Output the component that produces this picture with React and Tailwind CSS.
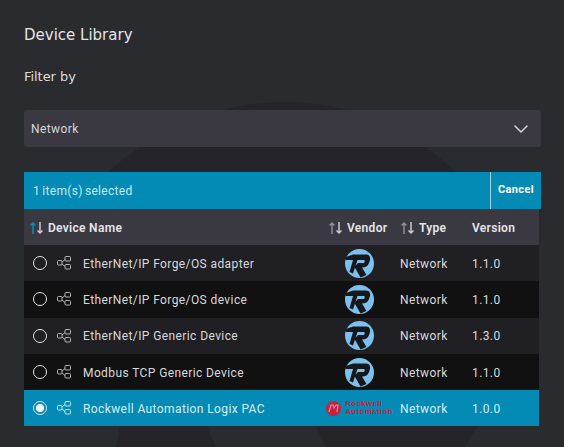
import { ChevronDown } from 'lucide-react';

const rows = [
  { name: 'EtherNet/IP Forge/OS adapter', version: '1.1.0', bg: 'bg-[#202024]' },
  { name: 'EtherNet/IP Forge/OS device', version: '1.1.0', bg: 'bg-[#111112]' },
  { name: 'EtherNet/IP Generic Device', version: '1.3.0', bg: 'bg-[#202024]' },
  { name: 'Modbus TCP Generic Device', version: '1.1.0', bg: 'bg-[#111112]' },
  { name: 'Rockwell Automation Logix PAC', version: '1.0.0', bg: 'bg-[#038bb5]', selected: true },
];

function SortIcon({ active }) {
  return (
    <svg width="16" height="14" viewBox="0 0 16 14" fill="none" strokeWidth="1.5" className="shrink-0">
      <path d="M4 13V2M1.5 4.5 4 2l2.5 2.5" stroke={active ? '#0b8db8' : '#8d8d93'} />
      <path d="M11 1v11M8.5 9.5 11 12l2.5-2.5" stroke="#c9c9ce" />
    </svg>
  );
}

function NodesIcon({ color }) {
  return (
    <svg width="14" height="14" viewBox="0 0 14 14" fill="none" stroke={color} strokeWidth="1" className="shrink-0">
      <rect x="0.5" y="4.5" width="4.5" height="4.5" rx="1" />
      <rect x="8" y="0.5" width="5.5" height="4.5" rx="1" />
      <rect x="8" y="8.5" width="5.5" height="4.5" rx="1" />
      <path d="M5 6 8 3.5M5 8l3 2.5" />
    </svg>
  );
}

function RLogo() {
  return (
    <svg width="29" height="29" viewBox="0 0 29 29">
      <circle cx="14.5" cy="14.5" r="14.5" fill="#7cc1ee" />
      <path d="M1 8 8 5.5H21C25 5.5 25.5 9 25 11L24 14C23 17 20.5 18.5 17 18.5L21.5 26 15.5 28.5 9.5 18 13 14H18C19 14 19.5 13.5 19.7 12.5 19.9 11.5 19.5 11 18.5 11H12.5L8 24.5 4.5 23 8 11H.5Z" fill="#17181c" />
    </svg>
  );
}

function RockwellLogo() {
  return (
    <div className="flex items-center gap-[4px]">
      <svg width="15" height="15" viewBox="0 0 15 15" className="shrink-0">
        <circle cx="7.5" cy="7.5" r="7.5" fill="#c8203f" />
        <path d="M3 11 5 4h2l1 3 2-3h2l-1 7" fill="none" stroke="#e8909f" strokeWidth="1.2" />
      </svg>
      <div className="text-[8px] leading-[8px] font-bold tracking-[0.3px] whitespace-nowrap text-[#c8203f] font-['Liberation_Sans',sans-serif]">
        <div>Rockwell</div>
        <div>Automation</div>
      </div>
    </div>
  );
}

function Row({ row }) {
  const iconColor = row.selected ? '#bfe6f2' : '#b4b4b9';
  return (
    <div className={`flex h-[36.3px] items-center text-[12px] tracking-[0.4px] ${row.selected ? 'text-[#d4eef6]' : 'text-[#d9d9dc]'} ${row.bg}`}>
      <div className="ml-[9px] flex h-[14px] w-[14px] shrink-0 items-center justify-center rounded-full border-[1.5px] border-[#e4e4e6]">
        {row.selected && <div className="h-[8px] w-[8px] rounded-full bg-white" />}
      </div>
      <div className="ml-[10px]">
        <NodesIcon color={iconColor} />
      </div>
      <div className="ml-[12px] w-[245px] shrink-0 truncate pt-[1px]">{row.name}</div>
      <div className="flex w-[63px] shrink-0 justify-center">
        {row.selected ? <RockwellLogo /> : <RLogo />}
      </div>
      <div className="ml-[9px] w-[72px] shrink-0 pt-[1px]">Network</div>
      <div className="pt-[1px]">{row.version}</div>
    </div>
  );
}

export default function App() {
  return (
    <div className="relative h-[447px] w-[564px] overflow-hidden bg-[#2a2b2f] font-['Roboto',sans-serif]">
      {/* faint backdrop shape */}
      <svg className="absolute top-0 left-0" width="564" height="447" viewBox="0 0 564 447" fill="none">
        <path d="M108 172C160 125 225 102 285 102C345 102 410 125 455 172L478 425 465 447H116L120 427Z" fill="#252529" />
        <path d="M207 427 216 447H326L316 427 300 300H220Z" fill="#2a2b2f" />
      </svg>

      <div className="relative px-[24px]">
        <h1 className="pt-[26px] text-[15px] leading-[18px] text-[#e4e4e6] font-['DejaVu_Sans',sans-serif] font-normal">Device Library</h1>
        <div className="mt-[24px] text-[13px] leading-[18px] tracking-[-0.05px] text-[#dcdcde] font-['DejaVu_Sans',sans-serif]">Filter by</div>

        <div className="mt-[24px] flex h-[37px] w-[517px] items-center justify-between rounded-[3px] bg-[#3a3942] pr-[8px] pl-[7px] text-[12px] tracking-[0.4px] text-[#d6d6da]">
          <span className="pt-[1px]">Network</span>
          <ChevronDown size={24} strokeWidth={1.5} className="text-[#d6d6da]" />
        </div>

        <div className="mt-[25px] flex h-[37px] w-[517px] items-center justify-between bg-[#038bb5] text-[12px] tracking-[0.3px] [word-spacing:-1px] text-[#c8e8f2]">
          <span className="pl-[9px]">1 item(s) selected</span>
          <div className="flex h-full w-[51px] items-center justify-center border-l border-[#9fd3e4] text-[11px] font-bold tracking-[0.4px] text-white">Cancel</div>
        </div>

        <div className="w-[515px]">
          <div className="flex h-[36px] items-center bg-[#3a3942] pt-[1px] text-[12px] font-semibold tracking-[0.3px] text-[#e6e6ea]">
            <div className="ml-[5px] flex w-[299px] shrink-0 items-center gap-[3px]">
              <SortIcon active />
              <span>Device Name</span>
            </div>
            <div className="flex w-[72px] shrink-0 items-center gap-[3px]">
              <SortIcon />
              <span>Vendor</span>
            </div>
            <div className="flex w-[72px] shrink-0 items-center gap-[3px]">
              <SortIcon />
              <span>Type</span>
            </div>
            <span>Version</span>
          </div>
          {rows.map((row) => (
            <Row key={row.name} row={row} />
          ))}
        </div>
      </div>
    </div>
  );
}
